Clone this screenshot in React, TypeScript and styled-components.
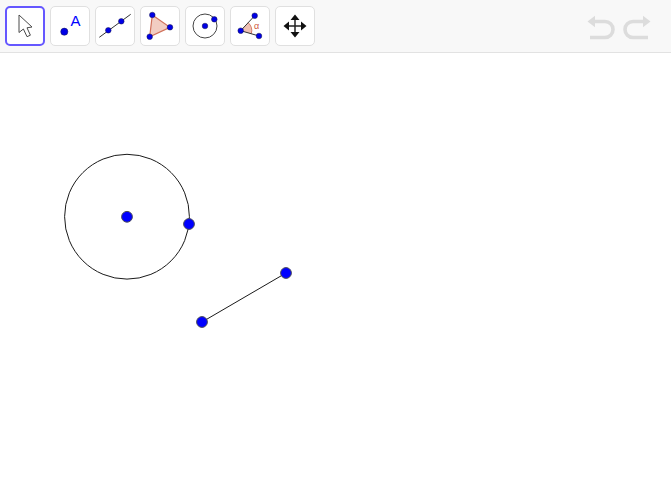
import React from "react";
import styled, { createGlobalStyle } from "styled-components";

const Global = createGlobalStyle`
  html, body { margin: 0; padding: 0; height: 100%; background: #fff; overflow: hidden; }
  #root { height: 100%; }
`;
const Page = styled.div`
  display: flex; flex-direction: column; width: 671px; height: 481px;
  font-family: "Liberation Sans", Arial, sans-serif;
`;
const Toolbar = styled.header`
  display: flex; align-items: flex-start; justify-content: space-between;
  box-sizing: border-box; height: 53px; padding: 6px 20px 0 5px;
  background: #f8f8f8; border-bottom: 1px solid #e2e2e2;
`;
const ToolGroup = styled.div`display: flex; gap: 5px;`;
const ToolButton = styled.button<{ $active?: boolean }>`
  display: flex; align-items: center; justify-content: center;
  box-sizing: border-box; width: 40px; height: 40px; padding: 0;
  background: #fff; border-radius: 5px;
  border: ${(p) => (p.$active ? "2px solid #6557ff" : "1px solid #e0e0e0")};
`;
const Icon = styled.svg`width: 40px; height: 40px; flex-shrink: 0; overflow: visible; display: block;`;
const HistoryGroup = styled.div`display: flex; gap: 4px; margin-top: 7px;`;
const HistoryIcon = styled.svg`width: 30px; height: 28px; display: block;`;
const Canvas = styled.main`flex: 1; background: #fff; min-height: 0;`;
const Drawing = styled.svg`width: 671px; height: 428px; display: block;`;
const IconLabel = styled.text<{ $size: number; $color: string }>`
  font-family: "Liberation Sans", Arial, sans-serif;
  font-size: ${(p) => p.$size}px; fill: ${(p) => p.$color};
`;

const Dot = ({ x, y, r = 2.8 }: { x: number; y: number; r?: number }) => (
  <circle cx={x} cy={y} r={r} fill="#0000e6" stroke="#1a1a4a" strokeWidth={0.5} />
);
const GeoPoint = ({ x, y }: { x: number; y: number }) => (
  <circle cx={x} cy={y} r={5.4} fill="#0000ff" stroke="#4a4a5a" strokeWidth={1} />
);

export default function App() {
  return (
    <Page>
      <Global />
      <Toolbar>
        <ToolGroup>
          <ToolButton $active aria-label="Move">
            <Icon viewBox="0 0 40 40">
              <path d="M14 9 L14 26.5 L18.4 23 L22 30.7 L25.4 29.2 L22 21.8 L27 21 Z" fill="#fff" stroke="#4a4a4a" strokeWidth={1} strokeLinejoin="round" />
            </Icon>
          </ToolButton>
          <ToolButton aria-label="Point">
            <Icon viewBox="0 0 40 40">
              <Dot x={14.3} y={25.7} r={3.6} />
              <IconLabel x={20.6} y={19.8} $size={15} $color="#0000ff">A</IconLabel>
            </Icon>
          </ToolButton>
          <ToolButton aria-label="Line">
            <Icon viewBox="0 0 40 40">
              <line x1={4.3} y1={31.3} x2={35.7} y2={8.3} stroke="#333" strokeWidth={1} />
              <Dot x={13.3} y={24.3} />
              <Dot x={26.3} y={15.3} />
            </Icon>
          </ToolButton>
          <ToolButton aria-label="Polygon">
            <Icon viewBox="0 0 40 40">
              <polygon points="12.3,9 30,21.3 9.7,30.7" fill="#f2cdc2" stroke="#d0705a" strokeWidth={1.2} />
              <Dot x={12.3} y={9} />
              <Dot x={30} y={21.3} />
              <Dot x={9.7} y={30.7} />
            </Icon>
          </ToolButton>
          <ToolButton aria-label="Circle">
            <Icon viewBox="0 0 40 40">
              <circle cx={20} cy={20} r={12} fill="none" stroke="#444" strokeWidth={1} />
              <Dot x={20} y={20} />
              <Dot x={29.3} y={13.3} />
            </Icon>
          </ToolButton>
          <ToolButton aria-label="Angle">
            <Icon viewBox="0 0 40 40">
              <path d="M10.7 24.7 L18.2 16.7 A11 11 0 0 1 21.3 27.8 Z" fill="#efc0b3" stroke="none" />
              <path d="M18.2 16.7 A11 11 0 0 1 21.3 27.8" fill="none" stroke="#d0705a" strokeWidth={0.9} />
              <path d="M24.7 9.7 L10.7 24.7 L29 30" fill="none" stroke="#333" strokeWidth={1} />
              <Dot x={10.7} y={24.7} />
              <Dot x={24.7} y={9.7} />
              <Dot x={29} y={30} />
              <IconLabel x={24} y={23} $size={9} $color="#d0583e">α</IconLabel>
            </Icon>
          </ToolButton>
          <ToolButton aria-label="Move graphics view">
            <Icon viewBox="0 0 40 40">
              <path d="M20 11 V29 M11 20 H29" stroke="#222" strokeWidth={1.5} fill="none" />
              <path d="M20 8.5 L24.5 14 H15.5 Z M20 31.5 L24.5 26 H15.5 Z M8.5 20 L14 15.5 V24.5 Z M31.5 20 L26 15.5 V24.5 Z" fill="#111" />
            </Icon>
          </ToolButton>
        </ToolGroup>
        <HistoryGroup>
          <HistoryIcon viewBox="0 0 30 28">
            <path d="M4 8.5 H18 A8 8 0 0 1 18 24.5 H3" fill="none" stroke="#dcdcdc" strokeWidth={3.6} />
            <path d="M0.5 8.5 L8 2.8 V14.2 Z" fill="#dcdcdc" />
          </HistoryIcon>
          <HistoryIcon viewBox="0 0 30 28">
            <path d="M26 8.5 H12 A8 8 0 0 0 12 24.5 H27" fill="none" stroke="#dcdcdc" strokeWidth={3.6} />
            <path d="M29.5 8.5 L22 2.8 V14.2 Z" fill="#dcdcdc" />
          </HistoryIcon>
        </HistoryGroup>
      </Toolbar>
      <Canvas>
        <Drawing viewBox="0 53 671 428">
          <circle cx={127} cy={216.7} r={62.4} fill="none" stroke="#1a1a1a" strokeWidth={1} />
          <line x1={202} y1={322} x2={286} y2={273} stroke="#1a1a1a" strokeWidth={1} />
          <GeoPoint x={127} y={216.8} />
          <GeoPoint x={189} y={224} />
          <GeoPoint x={286} y={273} />
          <GeoPoint x={202} y={322} />
        </Drawing>
      </Canvas>
    </Page>
  );
}
